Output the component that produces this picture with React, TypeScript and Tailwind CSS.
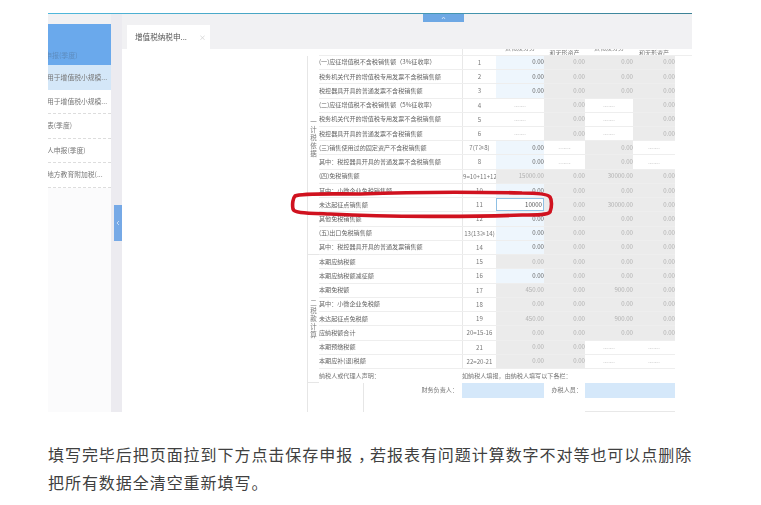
const FONT = "font-['Noto_Sans_CJK_SC','Noto_Sans',sans-serif]";

type Cell = "blue" | "gray" | "dash";

interface Row {
  label: string;
  num: string;
  cells: [Cell, Cell, Cell, Cell];
  values?: [string, string, string, string];
}

const ZERO: [string, string, string, string] = ["0.00", "0.00", "0.00", "0.00"];

const ROWS: Row[] = [
  { label: "(一)应征增值税不含税销售额（3%征收率）", num: "1", cells: ["blue", "gray", "gray", "gray"] },
  { label: "税务机关代开的增值税专用发票不含税销售额", num: "2", cells: ["blue", "gray", "gray", "gray"] },
  { label: "税控器具开具的普通发票不含税销售额", num: "3", cells: ["blue", "gray", "gray", "gray"] },
  { label: "(二)应征增值税不含税销售额（5%征收率）", num: "4", cells: ["dash", "gray", "dash", "gray"] },
  { label: "税务机关代开的增值税专用发票不含税销售额", num: "5", cells: ["dash", "gray", "dash", "gray"] },
  { label: "税控器具开具的普通发票不含税销售额", num: "6", cells: ["dash", "gray", "dash", "gray"] },
  { label: "(三)销售使用过的固定资产不含税销售额", num: "7(7≥8)", cells: ["blue", "dash", "gray", "dash"] },
  { label: "其中：税控器具开具的普通发票不含税销售额", num: "8", cells: ["blue", "dash", "gray", "dash"] },
  { label: "(四)免税销售额", num: "9=10+11+12", cells: ["gray", "gray", "gray", "gray"], values: ["15000.00", "0.00", "30000.00", "0.00"] },
  { label: "其中：小微企业免税销售额", num: "10", cells: ["blue", "gray", "gray", "gray"] },
  { label: "未达起征点销售额", num: "11", cells: ["blue", "gray", "gray", "gray"], values: ["10000", "0.00", "30000.00", "0.00"] },
  { label: "其他免税销售额", num: "12", cells: ["blue", "gray", "gray", "gray"] },
  { label: "(五)出口免税销售额", num: "13(13≥14)", cells: ["blue", "gray", "gray", "gray"] },
  { label: "其中：税控器具开具的普通发票销售额", num: "14", cells: ["blue", "gray", "gray", "gray"] },
  { label: "本期应纳税额", num: "15", cells: ["gray", "gray", "gray", "gray"] },
  { label: "本期应纳税额减征额", num: "16", cells: ["blue", "gray", "gray", "gray"] },
  { label: "本期免税额", num: "17", cells: ["gray", "gray", "gray", "gray"], values: ["450.00", "0.00", "900.00", "0.00"] },
  { label: "其中：小微企业免税额", num: "18", cells: ["gray", "gray", "gray", "gray"] },
  { label: "未达起征点免税额", num: "19", cells: ["gray", "gray", "gray", "gray"], values: ["450.00", "0.00", "900.00", "0.00"] },
  { label: "应纳税额合计", num: "20=15-16", cells: ["gray", "gray", "gray", "gray"] },
  { label: "本期预缴税额", num: "21", cells: ["gray", "gray", "dash", "dash"] },
  { label: "本期应补(退)税额", num: "22=20-21", cells: ["gray", "gray", "dash", "dash"] },
];

const MENU = ["用于增值税小规模...", "用于增值税小规模...", "表(季度)", "人申报(季度)", "地方教育附加税(..."];

const GRID = "grid grid-cols-[143px_34px_48px_41px_48px_42px]";

function ValueCell({ kind, value, editing }: { kind: Cell; value: string; editing: boolean }) {
  if (kind === "dash") {
    return <div className="flex items-center justify-center bg-white text-[5px] text-[#aaa]">-------</div>;
  }
  if (editing) {
    return (
      <div className="flex items-center justify-end border border-[#8fc0e4] bg-white pr-px text-[#555]">{value}</div>
    );
  }
  if (kind === "blue") {
    return <div className="flex items-center justify-end bg-[#eef6fd] text-[#666]">{value}</div>;
  }
  return <div className="flex items-center justify-end bg-[#ebebeb] text-[#b0b0b0]">{value}</div>;
}

function TaxRow({ row }: { row: Row }) {
  const values = row.values ?? ZERO;
  return (
    <div className={`${GRID} h-[14.24px] border-b border-[#eeeeee] text-[6.1px] leading-none`}>
      <div className="flex items-center whitespace-nowrap text-[#666]">{row.label}</div>
      <div className="overflow-hidden whitespace-nowrap border-l border-[#e8e8e8] text-center leading-[14px] text-[#777]">
        {row.num}
      </div>
      {row.cells.map((kind, i) => (
        <ValueCell key={i} kind={kind} value={values[i]} editing={row.num === "11" && i === 0} />
      ))}
    </div>
  );
}

function SideLabel({ chars, className }: { chars: string[]; className: string }) {
  return (
    <div className={`flex w-[12px] flex-col items-center justify-center border-b border-l border-[#e6e6e6] text-[6.5px] leading-[8px] text-[#777] ${className}`}>
      {chars.map((c, i) => (
        <span key={i}>{c}</span>
      ))}
    </div>
  );
}

function Sidebar() {
  return (
    <div className="flex w-[63px] shrink-0 flex-col bg-[#f1f1f3] pt-[10px]">
      <div className="flex h-[41px] items-end overflow-hidden bg-[#6aa9ec] pb-[6px] text-[7px] leading-none whitespace-nowrap text-[#5d8dc0]">
        <span className="-ml-[3px]">申报(季度)</span>
      </div>
      <div className="flex-1 bg-[#fbfbfc]">
        {MENU.map((item, i) => (
          <div
            key={i}
            className={`flex h-[24.5px] items-center overflow-hidden whitespace-nowrap text-[6.8px] leading-none text-[#777] ${
              i === 0 ? "bg-[#d4e7f8]" : "border-b border-dashed border-[#dddddd] bg-white"
            }`}
          >
            <span className="-ml-[1px]">{item}</span>
          </div>
        ))}
      </div>
    </div>
  );
}

function TabStrip() {
  return (
    <div className="flex h-[35px] shrink-0 items-end bg-[#f1f1f3] pl-[5px]">
      <div className="flex h-[24px] w-[83px] items-center justify-between bg-white pl-[8px] pr-[4px] text-[7.6px] leading-none text-[#555]">
        <span className="whitespace-nowrap">增值税纳税申...</span>
        <span className="text-[7px] text-[#ccc]">×</span>
      </div>
    </div>
  );
}

function TaxTable() {
  return (
    <div className="flex flex-1 flex-col overflow-hidden bg-white pl-[185px]">
      <div className={`${GRID} ml-[12px] h-[7px] overflow-hidden border-b border-[#eeeeee] text-[6px] leading-none text-[#777]`}>
        <div />
        <div className="border-l border-[#e8e8e8]" />
        <div className="-mt-[4px] text-center">货物及劳务</div>
        <div className="pt-px text-center">和无形资产</div>
        <div className="-mt-[4px] text-center">货物及劳务</div>
        <div className="pt-px text-center">和无形资产</div>
      </div>
      <div className="flex">
        <div className="flex flex-col">
          <SideLabel chars={["一", "计", "税", "依", "据"]} className="h-[199.4px] pb-[36px]" />
          <SideLabel chars={["二", "税", "款", "计", "算"]} className="h-[127.3px]" />
        </div>
        <div className="flex flex-col">
          {ROWS.map((row) => (
            <TaxRow key={row.num} row={row} />
          ))}
          <div className={`${GRID} h-[14px] text-[6.1px] leading-none text-[#777]`}>
            <div className="flex items-center whitespace-nowrap">纳税人或代理人声明：</div>
            <div className="col-span-5 flex items-center whitespace-nowrap">如纳税人填报，由纳税人填写以下各栏：</div>
          </div>
        </div>
      </div>
      <div className="grid grid-cols-[57px_98px_82px_41px_90px] grid-rows-[15px_14px] text-[6.1px] leading-none text-[#777]">
        <div className="row-span-2 border-x border-[#e6e6e6]" />
        <div className="flex items-center justify-end whitespace-nowrap pr-[4px]">财务负责人：</div>
        <div className="bg-[#d5e8fa]" />
        <div className="flex items-center justify-end whitespace-nowrap pr-[3px]">办税人员：</div>
        <div className="bg-[#d5e8fa]" />
        <div className="col-start-5 border-b border-[#e8e8e8]" />
      </div>
    </div>
  );
}

export default function App() {
  return (
    <div className={`h-[505px] w-[761px] overflow-hidden bg-white pl-[48px] pt-[13px] ${FONT}`}>
      <div className="relative flex h-[399px] w-[644px] flex-col overflow-hidden blur-[0.4px]">
        <div className="h-px shrink-0 bg-gradient-to-r from-[#4fb8dc] to-[#3d8296]" />
        <div className="flex min-h-0 flex-1">
          <Sidebar />
          <div className="w-[11px] shrink-0 bg-[#ecebf0]" />
          <div className="flex min-w-0 flex-1 flex-col">
            <TabStrip />
            <TaxTable />
          </div>
        </div>

        <div className="absolute left-[375px] top-[1px] flex h-[8px] w-[41px] items-center justify-center bg-[#6ea8e4]">
          <svg width="5" height="4" viewBox="0 0 5 4" fill="none">
            <path d="M1 3l1.5-2L4 3" stroke="#dbe9f8" strokeWidth="0.8" />
          </svg>
        </div>
        <div className="absolute left-[66px] top-[192px] flex h-[36px] w-[8px] items-center justify-center bg-[#76a9e6]">
          <svg width="4" height="6" viewBox="0 0 4 6" fill="none">
            <path d="M3 1L1 3l2 2" stroke="#dbe9f8" strokeWidth="0.8" />
          </svg>
        </div>

        <svg className="absolute left-[242px] top-[177px]" width="266" height="30" viewBox="0 0 266 30" fill="none">
          <path
            d="M5 6C3 8 2 14 3 19C4 23 14 23 40 24C100 27 180 27 232 25C246 25 258 25 260 22C262 17 262 10 260 7C258 4 248 3 232 3C190 2 120 2 70 4C40 4 12 3 5 6Z"
            stroke="#d0121f"
            strokeWidth="3.6"
          />
        </svg>
      </div>
      <p className="mt-[28px] w-[650px] text-[16px] leading-7 tracking-[0.95px] text-[#404040]">
        填写完毕后把页面拉到下方点击保存申报<span className="relative left-[5px]">，</span>若报表有问题计算数字不对等也可以点删除把所有数据全清空重新填写。
      </p>
    </div>
  );
}
